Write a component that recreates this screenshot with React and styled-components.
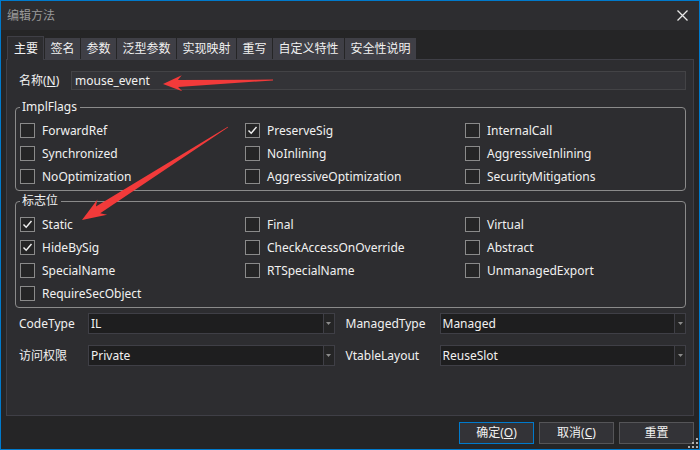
import React from 'react';
import styled, { createGlobalStyle } from 'styled-components';

const Global = createGlobalStyle`
  html, body { margin: 0; padding: 0; background: #252526; }
  body {
    font-family: "Noto Sans", "Noto Sans CJK SC", sans-serif;
    font-size: 12px;
    color: #f1f1f1;
  }
  * { box-sizing: border-box; }
`;

const Window = styled.div`
  position: relative;
  width: 700px;
  height: 450px;
  border: 1px solid #007acc;
  background: #252526;
  display: flex;
  flex-direction: column;
  overflow: hidden;
`;

const TitleBar = styled.div`
  flex: none;
  height: 29px;
  background: #2d2d30;
  display: flex;
  align-items: center;
  justify-content: space-between;
  padding: 0 11px 0 6px;
`;

const Title = styled.span`
  color: #9a9a9a;
  font-size: 12px;
  line-height: 16px;
`;

const CloseIcon = styled.svg`
  width: 11px;
  height: 11px;
  display: block;
`;

const Body = styled.div`
  flex: 1;
  min-height: 0;
  display: flex;
  flex-direction: column;
  padding: 6px 5px 0 5px;
`;

const TabStrip = styled.div`
  flex: none;
  height: 23px;
  display: flex;
  align-items: flex-end;
  gap: 1px;
  padding-left: 1px;
  position: relative;
  z-index: 1;
`;

const Tab = styled.div`
  height: ${p => (p.$active ? 24 : 21)}px;
  margin-bottom: ${p => (p.$active ? -1 : 0)}px;
  padding: ${p => (p.$active ? '0 5px 0 6px' : '0 4.5px')};
  display: flex;
  align-items: center;
  background: ${p => (p.$active ? '#2d2d30' : '#3f3f46')};
  border: 1px solid #3f3f46;
  border-bottom: none;
  color: #f1f1f1;
  line-height: 16px;
  white-space: nowrap;
`;

const Panel = styled.div`
  flex: 1;
  min-height: 0;
  background: #2d2d30;
  border: 1px solid #3f3f46;
  padding: 11px 7px 0 8px;
  display: flex;
  flex-direction: column;
`;

const NameRow = styled.div`
  display: flex;
  align-items: center;
  height: 19px;
`;

const FieldLabel = styled.span`
  flex: none;
  width: ${p => p.$w}px;
  margin-left: ${p => p.$ml || 0}px;
  padding-left: 4px;
  white-space: nowrap;
  line-height: 16px;
`;

const TextBox = styled.div`
  flex: 1;
  height: 19px;
  background: #333337;
  border: 1px solid #434346;
  padding-left: 3px;
  display: flex;
  align-items: center;
  line-height: 16px;
`;

const Group = styled.fieldset`
  margin: ${p => p.$mt}px 0 0 0;
  padding: 4px 4px 2px 4px;
  border: 1px solid #8a8a8a;
  border-radius: 4px;
  min-width: 0;
`;

const Legend = styled.legend`
  padding: 0 3px 0 2px;
  line-height: 16px;
  font-size: 12px;
  color: #f1f1f1;
`;

const CheckGrid = styled.div`
  display: grid;
  grid-template-columns: 225px 220px 1fr;
  grid-auto-rows: 23px;
`;

const CheckItem = styled.label`
  display: flex;
  align-items: center;
  gap: 7px;
  white-space: nowrap;
  line-height: 16px;
`;

const Box = styled.span`
  flex: none;
  width: 15px;
  height: 15px;
  border: 1px solid #8a8a8a;
  background: #252526;
  display: flex;
  align-items: center;
  justify-content: center;
`;

const FormRow = styled.div`
  display: flex;
  align-items: center;
  height: 21px;
  margin-top: ${p => p.$mt}px;
`;

const Combo = styled.div`
  flex: 1;
  height: 21px;
  background: #1e1e1f;
  border: 1px solid #3f3f46;
  display: flex;
`;

const ComboValue = styled.span`
  flex: 1;
  padding-left: 2px;
  display: flex;
  align-items: center;
  line-height: 16px;
`;

const ComboArrow = styled.span`
  flex: none;
  width: 11px;
  border-left: 1px solid #3f3f46;
  display: flex;
  align-items: center;
  justify-content: center;
  background: #252526;
`;

const Footer = styled.div`
  flex: none;
  display: flex;
  justify-content: flex-end;
  gap: 5px;
  padding: 6px 0 5px 0;
`;

const Button = styled.button`
  width: 75px;
  height: 22px;
  padding: 0;
  background: #333337;
  border: 1px solid ${p => (p.$primary ? '#007acc' : '#555558')};
  color: #f1f1f1;
  font-family: inherit;
  font-size: 12px;
  line-height: 16px;
`;

const Grip = styled.svg`
  position: absolute;
  right: 0;
  bottom: 0;
  width: 12px;
  height: 12px;
`;

const Overlay = styled.svg`
  position: absolute;
  left: -1px;
  top: -1px;
  width: 700px;
  height: 450px;
  pointer-events: none;
  z-index: 5;
`;

function Check({ label, checked }) {
  return (
    <CheckItem>
      <Box>
        {checked && (
          <svg width="11" height="11" viewBox="0 0 11 11">
            <polyline points="1.5,5.5 4.2,8.3 9.5,2" fill="none" stroke="#f1f1f1" strokeWidth="1.4" />
          </svg>
        )}
      </Box>
      {label}
    </CheckItem>
  );
}

function Select({ value }) {
  return (
    <Combo>
      <ComboValue>{value}</ComboValue>
      <ComboArrow>
        <svg width="5" height="3" viewBox="0 0 5 3">
          <polygon points="0,0 5,0 2.5,3" fill="#8c8c8c" />
        </svg>
      </ComboArrow>
    </Combo>
  );
}

function arrowPoints(tail, tip, headLen, headHalf, shaftHead, shaftTail, notch) {
  const dx = tip[0] - tail[0];
  const dy = tip[1] - tail[1];
  const len = Math.hypot(dx, dy);
  const u = [dx / len, dy / len];
  const n = [-u[1], u[0]];
  const at = (d, w) => [tip[0] - u[0] * d + n[0] * w, tip[1] - u[1] * d + n[1] * w];
  const pts = [
    tip,
    at(headLen, headHalf),
    at(headLen - notch, shaftHead),
    [tail[0] + n[0] * shaftTail, tail[1] + n[1] * shaftTail],
    [tail[0] - n[0] * shaftTail, tail[1] - n[1] * shaftTail],
    at(headLen - notch, -shaftHead),
    at(headLen, -headHalf),
  ];
  return pts.map(p => p.map(v => v.toFixed(1)).join(',')).join(' ');
}

const tabs = ['主要', '签名', '参数', '泛型参数', '实现映射', '重写', '自定义特性', '安全性说明'];

const implFlags = [
  ['ForwardRef', false], ['PreserveSig', true], ['InternalCall', false],
  ['Synchronized', false], ['NoInlining', false], ['AggressiveInlining', false],
  ['NoOptimization', false], ['AggressiveOptimization', false], ['SecurityMitigations', false],
];

const flags = [
  ['Static', true], ['Final', false], ['Virtual', false],
  ['HideBySig', true], ['CheckAccessOnOverride', false], ['Abstract', false],
  ['SpecialName', false], ['RTSpecialName', false], ['UnmanagedExport', false],
  ['RequireSecObject', false],
];

export default function App() {
  return (
    <>
      <Global />
      <Window>
        <TitleBar>
          <Title>编辑方法</Title>
          <CloseIcon viewBox="0 0 11 11">
            <path d="M0.5 0.5 L10.5 10.5 M10.5 0.5 L0.5 10.5" stroke="#e8e8e8" strokeWidth="1.3" />
          </CloseIcon>
        </TitleBar>
        <Body>
          <TabStrip>
            {tabs.map((t, i) => (
              <Tab key={t} $active={i === 0}>{t}</Tab>
            ))}
          </TabStrip>
          <Panel>
            <NameRow>
              <FieldLabel $w={56}>名称(<u>N</u>)</FieldLabel>
              <TextBox>mouse_event</TextBox>
            </NameRow>
            <Group $mt={9}>
              <Legend>ImplFlags</Legend>
              <CheckGrid>
                {implFlags.map(([l, c]) => <Check key={l} label={l} checked={c} />)}
              </CheckGrid>
            </Group>
            <Group $mt={2}>
              <Legend>标志位</Legend>
              <CheckGrid>
                {flags.map(([l, c]) => <Check key={l} label={l} checked={c} />)}
              </CheckGrid>
            </Group>
            <FormRow $mt={5}>
              <FieldLabel $w={73}>CodeType</FieldLabel>
              <Select value="IL" />
              <FieldLabel $w={98} $ml={7}>ManagedType</FieldLabel>
              <Select value="Managed" />
            </FormRow>
            <FormRow $mt={11}>
              <FieldLabel $w={73}>访问权限</FieldLabel>
              <Select value="Private" />
              <FieldLabel $w={98} $ml={7}>VtableLayout</FieldLabel>
              <Select value="ReuseSlot" />
            </FormRow>
          </Panel>
          <Footer>
            <Button $primary>确定(<u>O</u>)</Button>
            <Button>取消(<u>C</u>)</Button>
            <Button>重置</Button>
          </Footer>
        </Body>
        <Grip viewBox="0 0 12 12">
          {[[9, 1], [5, 5], [9, 5], [1, 9], [5, 9], [9, 9]].map(([x, y]) => (
            <rect key={`${x}-${y}`} x={x} y={y} width="2" height="2" fill="#b0b0b0" />
          ))}
        </Grip>
        <Overlay viewBox="0 0 700 450">
          <polygon points={arrowPoints([273, 80], [163, 84], 19, 8, 3.5, 0.4, 4)} fill="#f23a3a" />
          <polygon points={arrowPoints([228, 127], [82, 220], 24, 9, 4, 0.4, 5)} fill="#f23a3a" />
        </Overlay>
      </Window>
    </>
  );
}
